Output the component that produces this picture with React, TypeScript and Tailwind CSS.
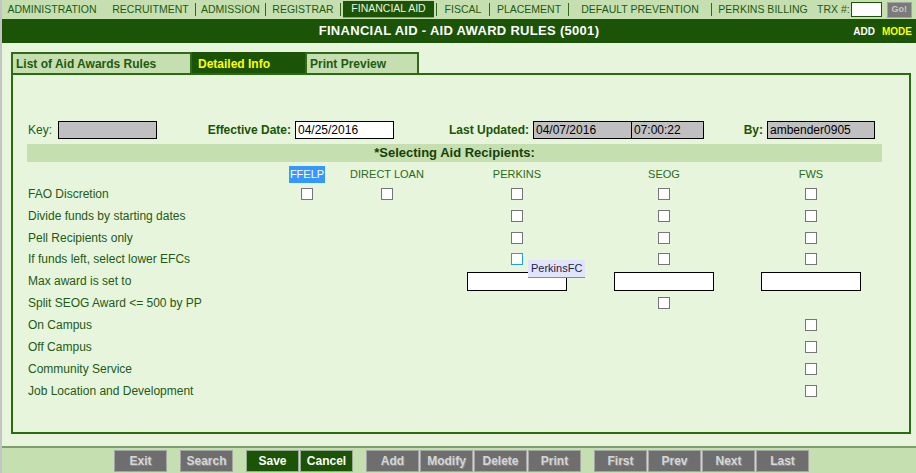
import React from 'react'

const FONT = { fontFamily: "'Liberation Sans', Arial, sans-serif" }

type Cell = 'cb' | 'cbf' | 'in' | null

const ROWS: { label: string; cells: Cell[] }[] = [
  { label: 'FAO Discretion', cells: ['cb', 'cb', 'cb', 'cb', 'cb'] },
  { label: 'Divide funds by starting dates', cells: [null, null, 'cb', 'cb', 'cb'] },
  { label: 'Pell Recipients only', cells: [null, null, 'cb', 'cb', 'cb'] },
  { label: 'If funds left, select lower EFCs', cells: [null, null, 'cbf', 'cb', 'cb'] },
  { label: 'Max award is set to', cells: [null, null, 'in', 'in', 'in'] },
  { label: 'Split SEOG Award <= 500 by PP', cells: [null, null, null, 'cb', null] },
  { label: 'On Campus', cells: [null, null, null, null, 'cb'] },
  { label: 'Off Campus', cells: [null, null, null, null, 'cb'] },
  { label: 'Community Service', cells: [null, null, null, null, 'cb'] },
  { label: 'Job Location and Development', cells: [null, null, null, null, 'cb'] },
]

const GRID = 'grid grid-cols-[240px_78px_82px_178px_116px_178px] items-center'

function Sep() {
  return <span className="w-px h-[13px] bg-[#2d6a1a] shrink-0" />
}

function NavItem({ w, label }: { w: string; label: string }) {
  return <div className={`${w} shrink-0 text-center`}>{label}</div>
}

function Check({ focus }: { focus?: boolean }) {
  return (
    <span
      className={`block w-[12px] h-[12px] bg-white border ${focus ? 'border-[#1ea0e6]' : 'border-[#767676]'}`}
    />
  )
}

function Btn({ label, on }: { label: string; on?: boolean }) {
  return (
    <button
      className={
        on
          ? 'w-[53px] h-[22px] bg-[#1b5406] border border-[#9aa896] text-white font-bold text-[12px]'
          : 'w-[53px] h-[22px] bg-[#6e6e6e] border border-[#a4a4a4] text-[#d6d6d6] font-bold text-[12px] [text-shadow:1px_1px_0_#8c8c8c]'
      }
    >
      {label}
    </button>
  )
}

export default function App() {
  return (
    <div className="w-[916px] h-[473px] overflow-hidden bg-[#e6f5dc] border-l-2 border-[#c4c4c4] flex flex-col" style={FONT}>
      {/* top nav */}
      <div className="h-[19px] bg-[#c6dfb0] flex items-center text-[10.5px] text-[#1d5a10] shrink-0">
        <NavItem w="w-[100px]" label="ADMINISTRATION" />
        <div className="w-[93px] shrink-0 text-center pl-[4px]">RECRUITMENT</div>
        <Sep />
        <NavItem w="w-[69px]" label="ADMISSION" />
        <Sep />
        <NavItem w="w-[74px]" label="REGISTRAR" />
        <Sep />
        <div className="w-[95px] shrink-0 px-[2px] self-stretch pt-px">
          <div className="h-[17px] bg-[#1b5406] text-[#e8f4e0] flex items-center justify-center border-b border-[#7fa86a]">
            FINANCIAL AID
          </div>
        </div>
        <Sep />
        <NavItem w="w-[52px]" label="FISCAL" />
        <Sep />
        <NavItem w="w-[78px]" label="PLACEMENT" />
        <Sep />
        <NavItem w="w-[142px]" label="DEFAULT PREVENTION" />
        <Sep />
        <NavItem w="w-[102px]" label="PERKINS BILLING" />
        <span className="ml-[3px]">TRX #:</span>
        <input className="ml-[1px] w-[31px] h-[15px] bg-white border border-[#1b5406] outline-none" />
        <button className="ml-[5px] w-[25px] h-[16px] bg-[#7a7a7a] border border-[#a4a4a4] text-[9px] font-bold text-[#c8c8c8] leading-none">
          Go!
        </button>
      </div>

      {/* title */}
      <div className="h-[24px] bg-[#1b5406] relative flex items-center justify-center shrink-0">
        <span className="text-white font-bold text-[13px] tracking-[0.3px]">FINANCIAL AID - AID AWARD RULES (5001)</span>
        <span className="absolute right-[4px] top-[5px] text-[10px] font-bold">
          <span className="text-white">ADD</span>
          <span className="text-[#ffff00] ml-[7px]">MODE</span>
        </span>
      </div>

      {/* body */}
      <div className="px-[9px] pt-[9px] shrink-0">
        <div className="flex h-[21px] text-[12px] font-bold">
          <div className="w-[181px] bg-[#c6dfb0] border-2 border-b-0 border-[#2f6a16] text-[#1f5a12] pl-[3px] flex items-center">
            List of Aid Awards Rules
          </div>
          <div className="w-[113px] bg-[#1b5406] border-2 border-b-0 border-[#1b5406] text-[#ffff00] pl-[4px] flex items-center">
            Detailed Info
          </div>
          <div className="w-[114px] bg-[#c6dfb0] border-2 border-b-0 border-[#2f6a16] text-[#1f5a12] pl-[3px] flex items-center">
            Print Preview
          </div>
        </div>

        <div className="h-[361px] border-2 border-[#2b6b12] w-[900px]">
          {/* key row */}
          <div className="mt-[46px] h-[17px] flex items-center text-[12px] pl-[15px]">
            <span className="w-[30px] text-[#245a16]">Key:</span>
            <span className="w-[99px] h-[18px] bg-[#c0c0c0] border border-black" />
            <span className="w-[138px] text-right pr-[4px] font-bold text-[#1b5406]">Effective Date:</span>
            <span className="w-[99px] h-[18px] bg-white border border-black pl-[2px] leading-[16px] text-black">04/25/2016</span>
            <span className="w-[139px] text-right pr-[4px] font-bold text-[#1b5406]">Last Updated:</span>
            <span className="w-[99px] h-[18px] bg-[#c0c0c0] border border-black pl-[2px] leading-[16px] text-black">04/07/2016</span>
            <span className="w-[72px] h-[18px] bg-[#c0c0c0] border border-black border-l-0 pl-[2px] leading-[16px] text-black">07:00:22</span>
            <span className="w-[63px] text-right pr-[4px] font-bold text-[#1b5406]">By:</span>
            <span className="w-[108px] h-[18px] bg-[#c0c0c0] border border-black pl-[2px] leading-[16px] text-black">ambender0905</span>
          </div>

          {/* section bar */}
          <div className="mt-[6px] ml-[14px] w-[855px] h-[18px] bg-[#c6dfb0] flex items-center justify-center text-[13px] font-bold text-[#173f08]">
            *Selecting Aid Recipients:
          </div>

          {/* grid */}
          <div className="pl-[15px] mt-[4px] text-[12px] text-[#245a16]">
            <div className={`${GRID} h-[17px] text-[11px] text-[#2a6a1a]`}>
              <span />
              <span className="justify-self-center bg-[#3399ff] text-white px-px">FFELP</span>
              <span className="justify-self-center">DIRECT LOAN</span>
              <span className="justify-self-center">PERKINS</span>
              <span className="justify-self-center">SEOG</span>
              <span className="justify-self-center">FWS</span>
            </div>
            {ROWS.map((r) => (
              <div key={r.label} className={`${GRID} h-[21.85px]`}>
                <span>{r.label}</span>
                {r.cells.map((c, i) => (
                  <div key={i} className="flex justify-center relative">
                    {c === 'cb' && <Check />}
                    {c === 'cbf' && (
                      <>
                        <Check focus />
                        <span className="absolute left-[100px] top-[7px] bg-[#e1e5fb] border-b border-[#7a88c4] text-[#22224a] text-[11px] px-[3px] h-[18px] leading-[17px] z-10">
                          PerkinsFC
                        </span>
                      </>
                    )}
                    {c === 'in' && <span className="block w-[100px] h-[19px] bg-white border border-black" />}
                  </div>
                ))}
              </div>
            ))}
          </div>
        </div>
      </div>

      {/* bottom bar */}
      <div className="mt-[12px] flex-1 bg-[#c6dfb0] border-t-2 border-[#7d9f6c] pl-[112px] pt-[2px] flex gap-[13px]">
        <div className="flex gap-px"><Btn label="Exit" /></div>
        <div className="flex gap-px"><Btn label="Search" /></div>
        <div className="flex gap-px"><Btn label="Save" on /><Btn label="Cancel" on /></div>
        <div className="flex gap-px">
          <Btn label="Add" /><Btn label="Modify" /><Btn label="Delete" /><Btn label="Print" />
        </div>
        <div className="flex gap-px">
          <Btn label="First" /><Btn label="Prev" /><Btn label="Next" /><Btn label="Last" />
        </div>
      </div>
    </div>
  )
}
